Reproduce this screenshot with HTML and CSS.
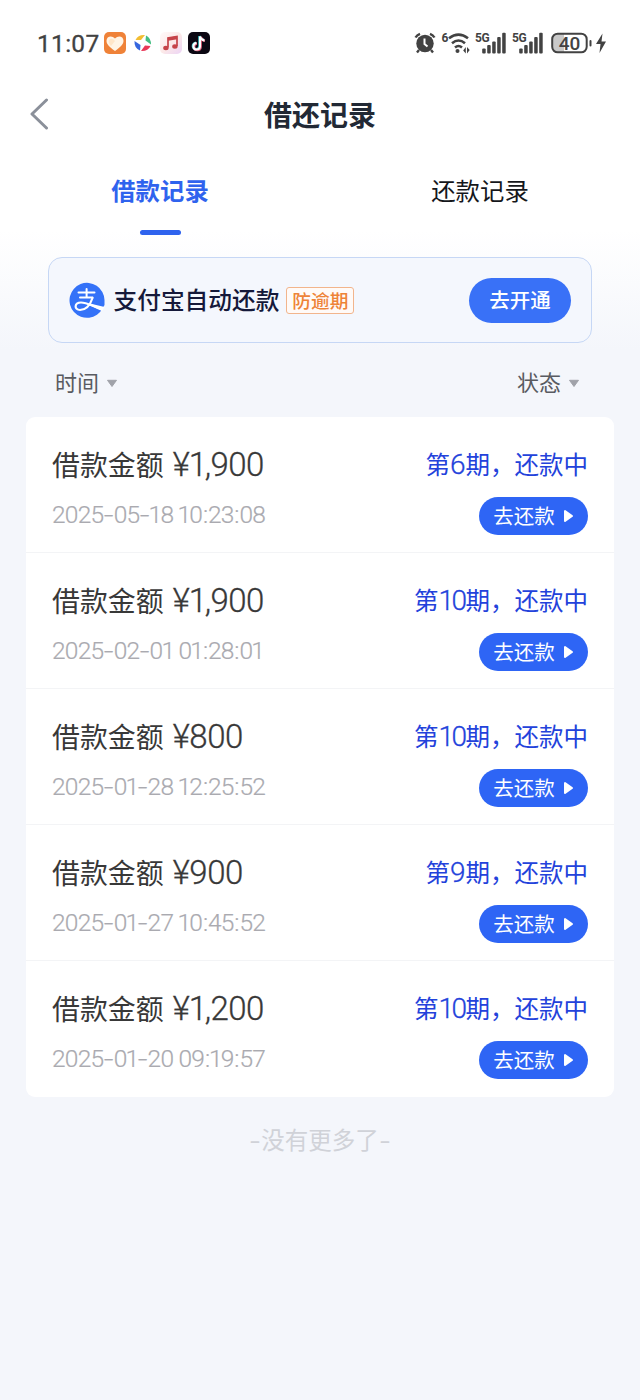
FILE: index.html
```html
<!DOCTYPE html>
<html lang="zh-CN">
<head>
<meta charset="utf-8">
<title>借还记录</title>
<link rel="stylesheet" href="styles.css">
</head>
<body>
<header class="status-bar">
  <div class="status-left">
    <span class="clock">11:07</span>
    <svg class="app-icon" width="22" height="22" viewBox="0 0 22 22"><rect width="22" height="22" rx="5" fill="#ef8238"/><path d="M11 19C5 15 2.500 12 2.500 8.800C2.500 4 8 3 11 6.500C14 3 19.500 4 19.500 8.800C19.500 12 17 15 11 19Z" fill="#fff4e5"/><path d="M5 8Q8 5 11 9L7 14Q4 11 5 8Z" fill="#ffe6c8"/></svg>
    <svg class="app-icon" width="22" height="22" viewBox="0 0 22 22"><path d="M3.500 8Q6 2.500 13 3L9 8Z" fill="#f2bd32"/><path d="M14 3.500Q19 6 19 12.500L13.500 8.500Z" fill="#43bd82"/><path d="M18.500 14Q16 19.500 9 19L13 13.500Z" fill="#e93858"/><path d="M8 18.500Q2 16 2.500 9L8.500 13Z" fill="#3566df"/></svg>
    <svg class="app-icon" width="22" height="22" viewBox="0 0 22 22"><defs><linearGradient id="music" x2="1" y2="1"><stop stop-color="#fffafa"/><stop offset=".5" stop-color="#fce9e8"/><stop offset="1" stop-color="#ecd4f5"/></linearGradient></defs><rect width="22" height="22" rx="5" fill="url(#music)"/><path d="M8 15.500V6L17 4.500V14" fill="none" stroke="#c64349" stroke-width="1.700"/><path d="M8 7.200L17 5.700" stroke="#c64349" stroke-width="3"/><ellipse cx="5.900" cy="16" rx="2.700" ry="2.200" fill="#c64349"/><ellipse cx="14.900" cy="14.500" rx="2.700" ry="2.200" fill="#c64349"/></svg>
    <svg class="app-icon" width="22" height="22" viewBox="0 0 22 22"><rect width="22" height="22" rx="5" fill="#0b0712"/><g fill="none" stroke-width="2.500"><path d="M11.500 4V14A3.300 3.300 0 1 1 8 10.700M11.500 4Q12.500 7.500 16 8" stroke="#46cbd0"/><path d="M12.700 5V15A3.300 3.300 0 1 1 9 11.500M12.700 5Q14 8.500 17 8.800" stroke="#d65873"/><path d="M12 4.500V14.500A3.300 3.300 0 1 1 8.500 11M12 4.500Q13 8 16.500 8.400" stroke="#fff" stroke-width="2"/></g></svg>
  </div>
  <div class="status-right">
    <svg width="194" height="24" viewBox="0 0 194 24" fill="#424242">
      <circle cx="11" cy="12.500" r="8.700"/><path d="M1.500 6.500Q3 4 6 2.800M20.500 6.500Q19 4 16 2.800M5 19L3 21.500M17 19L19 21.500" fill="none" stroke="#424242" stroke-width="2.400"/><path d="M10.500 7.500V13L13.500 15.500" fill="none" stroke="#fff" stroke-width="2"/>
      <text x="27.500" y="11" class="net-mark">6</text>
      <g fill="none" stroke="#424242" stroke-width="2.600"><path d="M35 7.300Q44.500 0 54 7.300M38 12.200Q44.500 6.800 51 12.200M41 16.500Q44.500 13.500 48 16.500"/></g><circle cx="43.500" cy="20" r="2"/><path d="M49.200 19.500L51.800 16V22.500ZM55.700 19L53 16V22.500Z"/>
      <text x="61" y="11" class="net-mark">5G</text>
      <g id="bars"><rect x="68.200" y="17.500" width="3.500" height="5" rx="1"/><rect x="73.200" y="14" width="3.500" height="8.500" rx="1"/><rect x="78.200" y="10.500" width="3.500" height="12" rx="1"/><rect x="83.200" y="6" width="3.500" height="16.500" rx="1"/><rect x="88.200" y="1.700" width="3.500" height="20.800" rx="1"/></g>
      <text x="98" y="11" class="net-mark">5G</text><use href="#bars" x="37"/>
      <path d="M143 3H150V21H143Q139 21 139 16V8Q139 3 143 3Z" fill="#c9c9c9"/><rect x="138.200" y="2.700" width="34.500" height="18.600" rx="5.500" fill="none" stroke="#424242" stroke-width="2"/><text x="155.500" y="18.500" class="battery-level">40</text><rect x="175.500" y="9" width="2" height="6.500" rx="1"/><path d="M188.500 2.500L182 13H186.500L185.500 22L192 10.500H187.500Z"/>
    </svg>
  </div>
</header>
<nav class="title-bar">
  <svg class="back" width="20" height="32" viewBox="0 0 20 32"><path d="M16.500 2L2 16L16.500 30" fill="none" stroke="#8b909a" stroke-width="3" stroke-linecap="round" stroke-linejoin="round"/></svg>
  <h1>借还记录</h1>
</nav>
<div class="tabs">
  <div class="tab active">借款记录</div>
  <div class="tab">还款记录</div>
</div>
<section class="promo">
  <svg class="alipay" width="36" height="36" viewBox="0 0 36 36"><path d="M33.500 26.500A17.500 17.500 0 1 1 35.500 18V23Z" fill="#3472f8"/><g fill="none" stroke="#fff" stroke-linecap="round"><path d="M9.500 10.500H25.500M17.600 7V15.500M11 15.500H23.500" stroke-width="2"/><path d="M23.500 16Q19.500 28 11 28C5 28 5 20.500 12 20.500C18 20.500 23 24 33 27" stroke-width="2.200"/></g><path d="M21 21.500L35.500 25L33 29Q28 27 21 23.500Z" fill="#fff"/></svg>
  <strong class="promo-title">支付宝自动还款</strong>
  <span class="promo-tag">防逾期</span>
  <button class="promo-button"><span>去开通</span></button>
</section>
<div class="filters">
  <span class="filter">时间<svg width="12" height="9" viewBox="0 0 12 9"><path d="M1.500 1.300H10.500L6 7.500Z" fill="#a0a2a9" stroke="#a0a2a9" stroke-linejoin="round"/></svg></span>
  <span class="filter">状态<svg width="12" height="9" viewBox="0 0 12 9"><path d="M1.500 1.300H10.500L6 7.500Z" fill="#a0a2a9" stroke="#a0a2a9" stroke-linejoin="round"/></svg></span>
</div>
<main class="records">
  <article class="record">
    <div class="line"><span class="amount">借款金额 <b class="num">¥<i class="one">1</i>,900</b></span><span class="state">第<b class="num">6</b>期，还款中</span></div>
    <div class="line"><time>2025<i class="dash">-</i>05<i class="dash">-</i><i class="one">1</i>8 <i class="one">1</i>0<i class="colon">:</i>23<i class="colon">:</i>08</time><button class="repay"><span>去还款</span><svg width="11" height="14" viewBox="0 0 11 14"><path d="M2 2V12L9 7Z" fill="#fff" stroke="#fff" stroke-width="2" stroke-linejoin="round"/></svg></button></div>
  </article>
  <article class="record">
    <div class="line"><span class="amount">借款金额 <b class="num">¥<i class="one">1</i>,900</b></span><span class="state">第<b class="num ten">10</b>期，还款中</span></div>
    <div class="line"><time>2025<i class="dash">-</i>02<i class="dash">-</i>0<i class="one">1</i> 0<i class="one">1</i><i class="colon">:</i>28<i class="colon">:</i>0<i class="one">1</i></time><button class="repay"><span>去还款</span><svg width="11" height="14" viewBox="0 0 11 14"><path d="M2 2V12L9 7Z" fill="#fff" stroke="#fff" stroke-width="2" stroke-linejoin="round"/></svg></button></div>
  </article>
  <article class="record">
    <div class="line"><span class="amount">借款金额 <b class="num">¥800</b></span><span class="state">第<b class="num ten">10</b>期，还款中</span></div>
    <div class="line"><time>2025<i class="dash">-</i>0<i class="one">1</i><i class="dash">-</i>28 <i class="one">1</i>2<i class="colon">:</i>25<i class="colon">:</i>52</time><button class="repay"><span>去还款</span><svg width="11" height="14" viewBox="0 0 11 14"><path d="M2 2V12L9 7Z" fill="#fff" stroke="#fff" stroke-width="2" stroke-linejoin="round"/></svg></button></div>
  </article>
  <article class="record">
    <div class="line"><span class="amount">借款金额 <b class="num">¥900</b></span><span class="state">第<b class="num">9</b>期，还款中</span></div>
    <div class="line"><time>2025<i class="dash">-</i>0<i class="one">1</i><i class="dash">-</i>27 <i class="one">1</i>0<i class="colon">:</i>45<i class="colon">:</i>52</time><button class="repay"><span>去还款</span><svg width="11" height="14" viewBox="0 0 11 14"><path d="M2 2V12L9 7Z" fill="#fff" stroke="#fff" stroke-width="2" stroke-linejoin="round"/></svg></button></div>
  </article>
  <article class="record">
    <div class="line"><span class="amount">借款金额 <b class="num">¥<i class="one">1</i>,200</b></span><span class="state">第<b class="num ten">10</b>期，还款中</span></div>
    <div class="line"><time>2025<i class="dash">-</i>0<i class="one">1</i><i class="dash">-</i>20 09<i class="colon">:</i><i class="one">1</i>9<i class="colon">:</i>57</time><button class="repay"><span>去还款</span><svg width="11" height="14" viewBox="0 0 11 14"><path d="M2 2V12L9 7Z" fill="#fff" stroke="#fff" stroke-width="2" stroke-linejoin="round"/></svg></button></div>
  </article>
</main>
<footer class="end"><i class="dash">-</i>没有更多了<i class="dash">-</i></footer>
</body>
</html>
```
FILE: styles.css
```css
* { box-sizing: border-box; }
body {
  margin: 0;
  width: 640px;
  min-height: 1400px;
  font-family: "Noto Sans CJK SC", sans-serif;
  background: linear-gradient(#fff 0, #fff 230px, #f4f6fb 350px);
  color: #333;
}
svg { display: block; flex: none; }
i { font-style: normal; }
button { border: 0; font-family: inherit; padding: 0; display: flex; align-items: center; justify-content: center; color: #fff; }
button span { padding-bottom: 2px; }
.status-bar { height: 86px; padding: 0 32px 0 37px; display: flex; justify-content: space-between; align-items: center; }
.status-left { display: flex; align-items: center; gap: 6px; }
.clock { font: 400 24.500px/28px Roboto, sans-serif; color: #424242; width: 61px; padding-top: 2px; letter-spacing: .3px; -webkit-text-stroke: .3px #424242; }
.net-mark { font: 700 12px Roboto, sans-serif; letter-spacing: -.5px; }
.battery-level { font: 500 19px Roboto, sans-serif; text-anchor: middle; }
.title-bar { height: 56px; padding: 0 30px; display: grid; grid-template-columns: 60px 1fr 60px; align-items: center; }
.title-bar h1 { margin: 0; text-align: center; font-size: 28px; line-height: 40px; font-weight: 700; color: #222935; }
.tabs { height: 93px; display: grid; grid-template-columns: 1fr 1fr; }
.tab { height: 93px; padding-top: 30px; text-align: center; font-size: 24.400px; line-height: 36px; color: #15171b; }
.tab.active { color: #2f63ee; font-weight: 700; }
.tab.active::after { content: ""; display: block; width: 41px; height: 5px; margin: 22px auto 0; border-radius: 3px; background: #2f63ee; }
.promo { margin: 22px 48px 0; height: 86px; border: 1.500px solid #c6d7f5; border-radius: 14px; background: #f4f7fd; padding: 0 20px; display: flex; align-items: center; }
.promo-title { margin-left: 8.500px; padding-bottom: 2px; font-weight: 500; font-size: 23.700px; color: #15193a; white-space: nowrap; }
.promo-tag { margin-left: 7px; width: 68px; height: 27px; border: 1px solid #f2b58c; border-radius: 3px; font-size: 18.700px; font-weight: 500; line-height: 23px; text-align: center; color: #ee8337; background: #fffaf7; }
.promo-button { margin-left: auto; width: 102px; height: 45px; border-radius: 23px; background: #3971f7; font-size: 20.500px; font-weight: 500; }
.filters { height: 73.500px; padding: 2px 60px 0 55px; display: flex; justify-content: space-between; align-items: center; }
.filter { display: flex; align-items: center; gap: 7px; font-size: 22px; line-height: 32px; color: #595b61; }
.filter svg { margin-top: 5px; }
.records { margin: 0 26px; background: #fff; border-radius: 9px; }
.record { height: 136.200px; padding: 26.500px 26px 0; border-bottom: 1.500px solid #f3f4f6; }
.record:last-child { border-bottom: 0; }
.line { display: flex; align-items: center; justify-content: space-between; height: 42px; white-space: nowrap; }
.line + .line { margin-top: 11.500px; height: 38px; }
.line .num { font-family: Roboto, sans-serif; font-weight: 300; -webkit-text-stroke: .3px; }
.amount { font-size: 27.900px; line-height: 42px; color: #383838; }
.amount .num { margin-left: 3px; font-size: 33px; letter-spacing: -.5px; }
.amount .one { margin: 0 -2px 0 -.5px; }
.state { font-size: 24.500px; line-height: 42px; color: #2342db; }
.state .num { font-size: 28px; }
.state .ten { letter-spacing: -2.500px; margin-right: 1px; }
time { font: 300 24.500px/36px Roboto, sans-serif; color: #aaaab0; letter-spacing: -.75px; margin-bottom: 2px; -webkit-text-stroke: .2px; }
time .one { margin: 0 -1px; }
time .colon { margin: 0 .7px; }
.dash { display: inline-block; margin: 0 2px; transform: scaleX(1.400); }
.repay { width: 109px; height: 38px; border-radius: 19px; background: #2e65f5; font-size: 20.500px; gap: 8px; }
.end { margin-top: 24px; text-align: center; font-size: 23.500px; line-height: 36px; color: #d0d2d8; }
```
